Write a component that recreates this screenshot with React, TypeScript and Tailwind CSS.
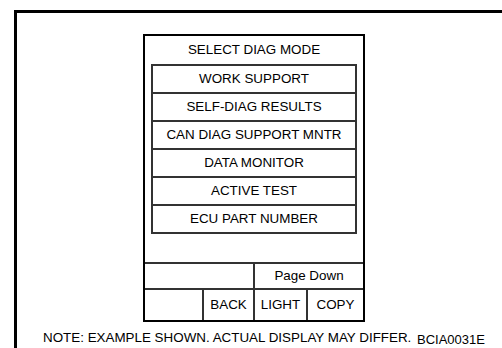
export default function App() {
  const items = ["WORK SUPPORT", "SELF-DIAG RESULTS", "CAN DIAG SUPPORT MNTR", "DATA MONITOR", "ACTIVE TEST", "ECU PART NUMBER"];
  return (
    <div className="relative w-[502px] h-[348px] overflow-hidden bg-white pt-[10px] pl-[14px] text-black text-[13.4px] leading-none font-['Liberation_Sans',Arial,sans-serif]">
      <div className="border-l-[3px] border-t-[3px] border-black h-[400px] pt-[21px]">
        {/* screen */}
        <div className="ml-[126px] w-[222px] h-[288px] border-2 border-black flex flex-col">
          <div className="h-[28px] flex items-center justify-center">SELECT DIAG MODE</div>
          <div className="mx-[6px] border-x-2 border-t-2 border-[#333]">
            {items.map(it => (
              <div key={it} className="h-[28px] border-b-2 border-[#333] flex items-center justify-center">{it}</div>
            ))}
          </div>
          <div className="h-[28px]" />
          <div className="h-[26px] border-t-2 border-[#333] grid grid-cols-[108px_110px]">
            <div />
            <div className="border-l-2 border-[#333] flex items-center justify-center">Page Down</div>
          </div>
          <div className="flex-1 border-t-2 border-[#333] grid grid-cols-[57px_51px_53px_57px]">
            <div />
            <div className="border-l-2 border-[#333] flex items-center justify-center">BACK</div>
            <div className="border-l-2 border-[#333] flex items-center justify-center">LIGHT</div>
            <div className="border-l-2 border-[#333] flex items-center justify-center">COPY</div>
          </div>
        </div>
        <p className="mt-[9px] pl-[26px] whitespace-nowrap">NOTE: EXAMPLE SHOWN. ACTUAL DISPLAY MAY DIFFER.</p>
      </div>
      <span className="absolute left-[417px] top-[333px] text-[13px] leading-[13px]">BCIA0031E</span>
    </div>
  );
}
